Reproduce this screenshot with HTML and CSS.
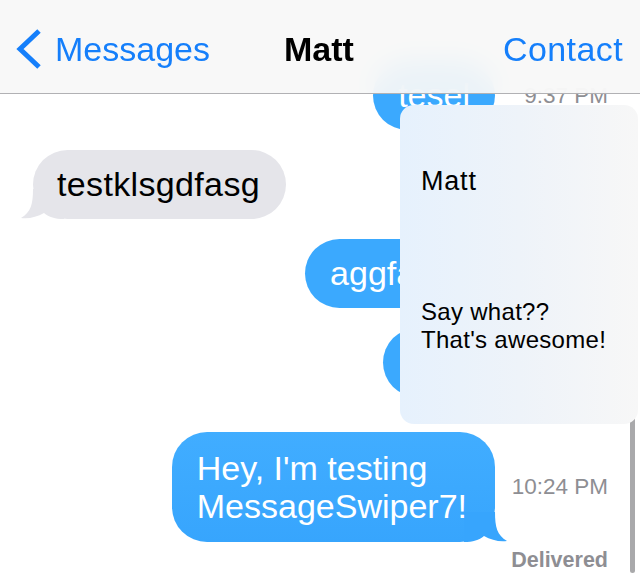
FILE: index.html
```html
<!DOCTYPE html>
<html lang="en">
<head>
<meta charset="utf-8">
<title>Matt</title>
<link rel="stylesheet" href="styles.css">
</head>
<body>
<div class="screen">
  <main class="thread">
    <div class="row sent">
      <div class="bubble blue">tesel</div>
      <span class="time">9:37 PM</span>
    </div>
    <div class="row received">
      <div class="bubble gray">testklsgdfasg<svg class="tail tail-left" viewBox="0 0 44 30" width="44" height="30"><path d="M13 0 C13 15 11 23 1 29 C9 30 17 28 24 24 C29 28 35 30 44 30 L44 0 Z"/></svg></div>
    </div>
    <div class="row sent">
      <div class="bubble blue">aggfasdg</div>
      <span class="time"></span>
    </div>
    <div class="row sent">
      <div class="bubble blue short">asdf</div>
      <span class="time"></span>
    </div>
    <div class="row sent last">
      <div class="bubble blue two">Hey, I'm testing<br>MessageSwiper7!<svg class="tail tail-right" viewBox="0 0 44 30" width="44" height="30"><path d="M31 0 C31 15 33 23 43 29 C35 30 27 28 20 24 C15 28 9 30 0 30 L0 0 Z"/></svg></div>
      <span class="time">10:24 PM</span>
    </div>
    <div class="status">Delivered</div>
  </main>

  <header class="nav">
    <a class="back">
      <svg class="chevron" viewBox="0 0 28 42" width="28" height="42"><polyline points="24,3 5,21 24,39"/></svg>
      <span>Messages</span>
    </a>
    <h1 class="title">Matt</h1>
    <a class="contact">Contact</a>
  </header>

  <div class="scrollbar"></div>

  <aside class="popup">
    <p class="popup-name">Matt</p>
    <p class="popup-msg">Say what??<br>That's awesome!</p>
  </aside>
</div>
</body>
</html>
```

FILE: styles.css
```css
html, body {
  margin: 0;
  padding: 0;
  background: #ffffff;
}

body {
  font-family: "Liberation Sans", Arial, Helvetica, sans-serif;
  width: 640px;
  height: 579px;
  overflow: hidden;
}

.screen {
  position: relative;
  width: 640px;
  height: 579px;
  overflow: hidden;
  background: #ffffff;
}

/* Navigation bar (translucent, lies over the thread) */
.nav {
  position: absolute;
  top: 0;
  left: 0;
  right: 0;
  height: 89px;
  padding: 4px 17px 0 15px;
  border-bottom: 1px solid #b1b1b4;
  background: rgba(247, 247, 248, 0.93);
  backdrop-filter: blur(14px);
  display: grid;
  grid-template-columns: 1fr auto 1fr;
  align-items: center;
  z-index: 5;
}

.back {
  display: flex;
  align-items: center;
  gap: 12px;
  color: #157ffb;
  font-size: 34px;
  line-height: 40px;
}

.chevron {
  display: block;
  fill: none;
  stroke: #157ffb;
  stroke-width: 5;
  stroke-linejoin: miter;
}

.title {
  margin: 0;
  font-size: 34px;
  line-height: 40px;
  font-weight: bold;
  color: #000000;
}

.contact {
  justify-self: end;
  color: #157ffb;
  font-size: 34px;
  line-height: 40px;
  letter-spacing: 0.4px;
}

/* Thread */
.thread {
  padding-top: 61px;
  display: flex;
  flex-direction: column;
}

.row {
  display: flex;
  align-items: center;
}

.row + .row {
  margin-top: 20px;
}

.row.last {
  margin-top: 35px;
}

.sent {
  justify-content: flex-end;
  padding-right: 32px;
}

.received {
  justify-content: flex-start;
  padding-left: 33px;
}

.bubble {
  position: relative;
  isolation: isolate;
  font-size: 34px;
  line-height: 38px;
  white-space: nowrap;
  border-radius: 35px;
  padding: 15px 25px 16px 25px;
}

.bubble.blue {
  background: #3ba9fe;
  color: #ffffff;
}

.bubble.short {
  padding-right: 23px;
}

.bubble.gray {
  background: #e5e5ea;
  color: #000000;
  letter-spacing: 0.35px;
  padding: 15px 26px 16px 24px;
}

.bubble.two {
  padding: 17px 28px 17px 25px;
  background: linear-gradient(#41adff, #37a5fd);
}

.tail {
  position: absolute;
  bottom: 0;
  display: block;
  z-index: -1;
}

.tail-left {
  left: -13px;
  fill: #e5e5ea;
}

.tail-right {
  right: -13px;
  fill: #37a5fd;
}

.time {
  width: 113px;
  flex: none;
  text-align: right;
  font-size: 22.5px;
  line-height: 26px;
  color: #8e8e93;
}

.status {
  margin-top: 6px;
  padding-right: 32px;
  text-align: right;
  font-size: 21.5px;
  line-height: 24px;
  font-weight: bold;
  color: #8e8e93;
}

/* Scroll indicator */
.scrollbar {
  position: absolute;
  left: 630px;
  top: 330px;
  width: 5px;
  height: 243px;
  border-radius: 3px;
  background: #a9a9ab;
  z-index: 2;
}

/* Swiped-in preview card */
.popup {
  position: absolute;
  left: 400px;
  top: 105px;
  width: 196px;
  height: 319px;
  padding: 0 21px;
  border-radius: 14px;
  background: linear-gradient(to right, #e6f1fd 0%, #eef3f9 50%, #f7f7f7 100%);
  z-index: 4;
}

.popup-name {
  margin: 60px 0 0;
  font-size: 27px;
  line-height: 32px;
  letter-spacing: 0.8px;
  color: #000000;
}

.popup-msg {
  margin: 101px 0 0;
  font-size: 24px;
  line-height: 28px;
  letter-spacing: 0.3px;
  color: #000000;
}
```
